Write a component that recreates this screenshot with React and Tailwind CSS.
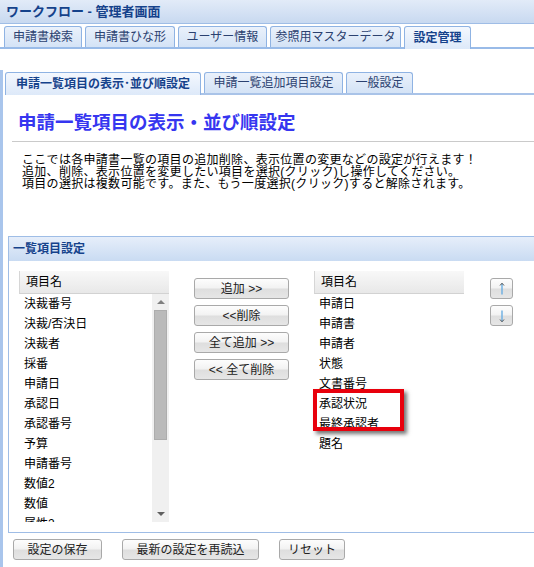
import React from "react"

const FONT = "font-['Liberation_Sans','Noto_Sans_CJK_JP',sans-serif]"

const BTN =
  "h-[21px] flex items-center justify-center rounded-[3px] border border-[#a9a9a9] bg-[linear-gradient(to_bottom,#fdfdfd_0%,#f2f2f2_48%,#dedede_52%,#e6e6e6_100%)] text-[12px] leading-[12px] text-[#222]"

const Tab = ({ label, width, active }) => (
  <div
    className={`${width} flex items-center justify-center rounded-t-[3px] border border-b-0 border-[#8fb3e3] text-[12px] leading-[12px] ${
      active
        ? "h-[23px] -mb-[2px] bg-[linear-gradient(to_bottom,#f4f8fe,#dde9f9)] font-bold text-[#15428b]"
        : "h-[21px] bg-[linear-gradient(to_bottom,#eaf1fb,#d4e3f6)] text-[#2b4170]"
    }`}
  >
    {label}
  </div>
)

const ListHeader = () => (
  <div className="h-[23px] flex items-center pl-[6px] border-l border-l-[#d6d6d6] border-b border-b-[#d2d2d2] bg-[linear-gradient(to_bottom,#f8f8f8,#e8e8e8)] text-[12px] leading-[12px] text-black">
    項目名
  </div>
)

const Row = ({ label }) => (
  <div className="h-[20px] flex items-center pl-[5px] text-[12px] leading-[12px] text-black whitespace-nowrap">
    {label}
  </div>
)

const Arrow = ({ down }) => (
  <svg width="10" height="14" viewBox="0 0 10 14">
    <line x1="5" y1="1.5" x2="5" y2="12.5" stroke="#6aaee2" strokeWidth="1.4" />
    {down ? (
      <path d="M3 10.5 L5 12.8 L7 10.5" fill="none" stroke="#555" strokeWidth="1" />
    ) : (
      <path d="M3 3.5 L5 1.2 L7 3.5" fill="none" stroke="#555" strokeWidth="1" />
    )}
  </svg>
)

export default function App() {
  const available = [
    "決裁番号",
    "決裁/否決日",
    "決裁者",
    "採番",
    "申請日",
    "承認日",
    "承認番号",
    "予算",
    "申請番号",
    "数値2",
    "数値",
    "属性2"
  ]
  const selected = [
    "申請日",
    "申請書",
    "申請者",
    "状態",
    "文書番号",
    "承認状況",
    "最終承認者",
    "題名"
  ]

  return (
    <div className={`w-[534px] h-[567px] overflow-hidden bg-white ${FONT}`}>
      {/* Title bar */}
      <div className="h-[24px] flex items-center pl-[6px] border-b border-[#9fbde6] bg-[linear-gradient(to_bottom,#e2ebf8,#c8d9f0)]">
        <span className="text-[13px] leading-[13px] font-bold text-[#15428b] whitespace-nowrap">
          ワークフロー - 管理者画面
        </span>
      </div>

      {/* Main tabs */}
      <div className="h-[25px] flex items-end gap-[3px] pl-[4px] border-b-2 border-[#99bbe8]">
        <Tab label="申請書検索" width="w-[78px]" />
        <Tab label="申請書ひな形" width="w-[90px]" />
        <Tab label="ユーザー情報" width="w-[89px]" />
        <Tab label="参照用マスターデータ" width="w-[131px]" />
        <Tab label="設定管理" width="w-[67px]" active />
      </div>

      <div className="h-[518px] border-l-[3px] border-[#a9c5ec] pl-[2px]">
        {/* Sub tabs */}
        <div className="mt-[21px] h-[25px] flex items-end gap-[3px] border-b-2 border-[#a9c3e8]">
          <Tab label="申請一覧項目の表示･並び順設定" width="w-[196px]" active />
          <Tab label="申請一覧追加項目設定" width="w-[139px]" />
          <Tab label="一般設定" width="w-[67px]" />
        </div>

        {/* Heading */}
        <div className="ml-[7px] mt-[16px] pb-[6px] border-b border-[#cacaca]">
          <h1 className="pl-[6px] h-[24px] flex items-center text-[18.5px] font-bold text-[#3636f0] whitespace-nowrap">
            申請一覧項目の表示・並び順設定
          </h1>
        </div>

        <div className="ml-[17px] mt-[12px] text-[12px] leading-[12px] tracking-[0.3px] text-black whitespace-nowrap">
          <p className="h-[12px] leading-[12px]">ここでは各申請書一覧の項目の追加削除、表示位置の変更などの設定が行えます！</p>
          <p className="h-[12px] leading-[12px]">追加、削除、表示位置を変更したい項目を選択(クリック)し操作してください。</p>
          <p className="h-[12px] leading-[12px]">項目の選択は複数可能です。また、もう一度選択(クリック)すると解除されます。</p>
        </div>

        {/* Panel */}
        <div className="ml-[3px] mt-[46px] border-t border-l border-b border-[#9fbde6]">
          <div className="h-[24px] flex items-center pl-[4px] bg-[linear-gradient(to_bottom,#e6eefa,#c9dbf2)]">
            <span className="text-[12px] leading-[12px] font-bold text-[#15428b]">一覧項目設定</span>
          </div>

          <div className="flex pt-[10px] pb-[10px] pl-[10px]">
            {/* Available list */}
            <div className="w-[150px] flex flex-col">
              <ListHeader />
              <div className="flex h-[228px]">
                <div className="flex-1 overflow-hidden">
                  {available.map((a) => (
                    <Row key={a} label={a} />
                  ))}
                </div>
                <div className="w-[17px] flex flex-col items-center bg-[#f0f0f0]">
                  <div className="h-[16px] flex items-center justify-center">
                    <div className="w-0 h-0 border-x-[4px] border-x-transparent border-b-[4px] border-b-[#808080]" />
                  </div>
                  <div className="w-[13px] h-[130px] bg-[#bababa] border border-[#adadad]" />
                  <div className="flex-1" />
                  <div className="h-[16px] flex items-center justify-center">
                    <div className="w-0 h-0 border-x-[4px] border-x-transparent border-t-[4px] border-t-[#606060]" />
                  </div>
                </div>
              </div>
            </div>

            {/* Move buttons */}
            <div className="ml-[25px] mt-[7px] flex flex-col gap-[6px]">
              <button className={`${BTN} w-[95px]`}>追加 &gt;&gt;</button>
              <button className={`${BTN} w-[95px]`}>&lt;&lt;削除</button>
              <button className={`${BTN} w-[95px]`}>全て追加 &gt;&gt;</button>
              <button className={`${BTN} w-[95px]`}>&lt;&lt; 全て削除</button>
            </div>

            {/* Selected list */}
            <div className="relative ml-[25px] w-[150px] flex flex-col">
              <ListHeader />
              {selected.map((s) => (
                <Row key={s} label={s} />
              ))}
              <div className="absolute left-[-1px] top-[118px] w-[91px] h-[42px] border-[4px] border-[#e8000c] shadow-[3px_3px_4px_rgba(0,0,0,0.55)]" />
            </div>

            {/* Order buttons */}
            <div className="ml-[26px] mt-[7px] flex flex-col gap-[6px]">
              <button className={`${BTN} w-[23px]`}>
                <Arrow />
              </button>
              <button className={`${BTN} w-[23px]`}>
                <Arrow down />
              </button>
            </div>
          </div>
        </div>

        {/* Footer buttons */}
        <div className="ml-[8px] mt-[6px] flex gap-[20px]">
          <button className={`${BTN} w-[89px]`}>設定の保存</button>
          <button className={`${BTN} w-[137px]`}>最新の設定を再読込</button>
          <button className={`${BTN} w-[66px]`}>リセット</button>
        </div>
      </div>
    </div>
  )
}
